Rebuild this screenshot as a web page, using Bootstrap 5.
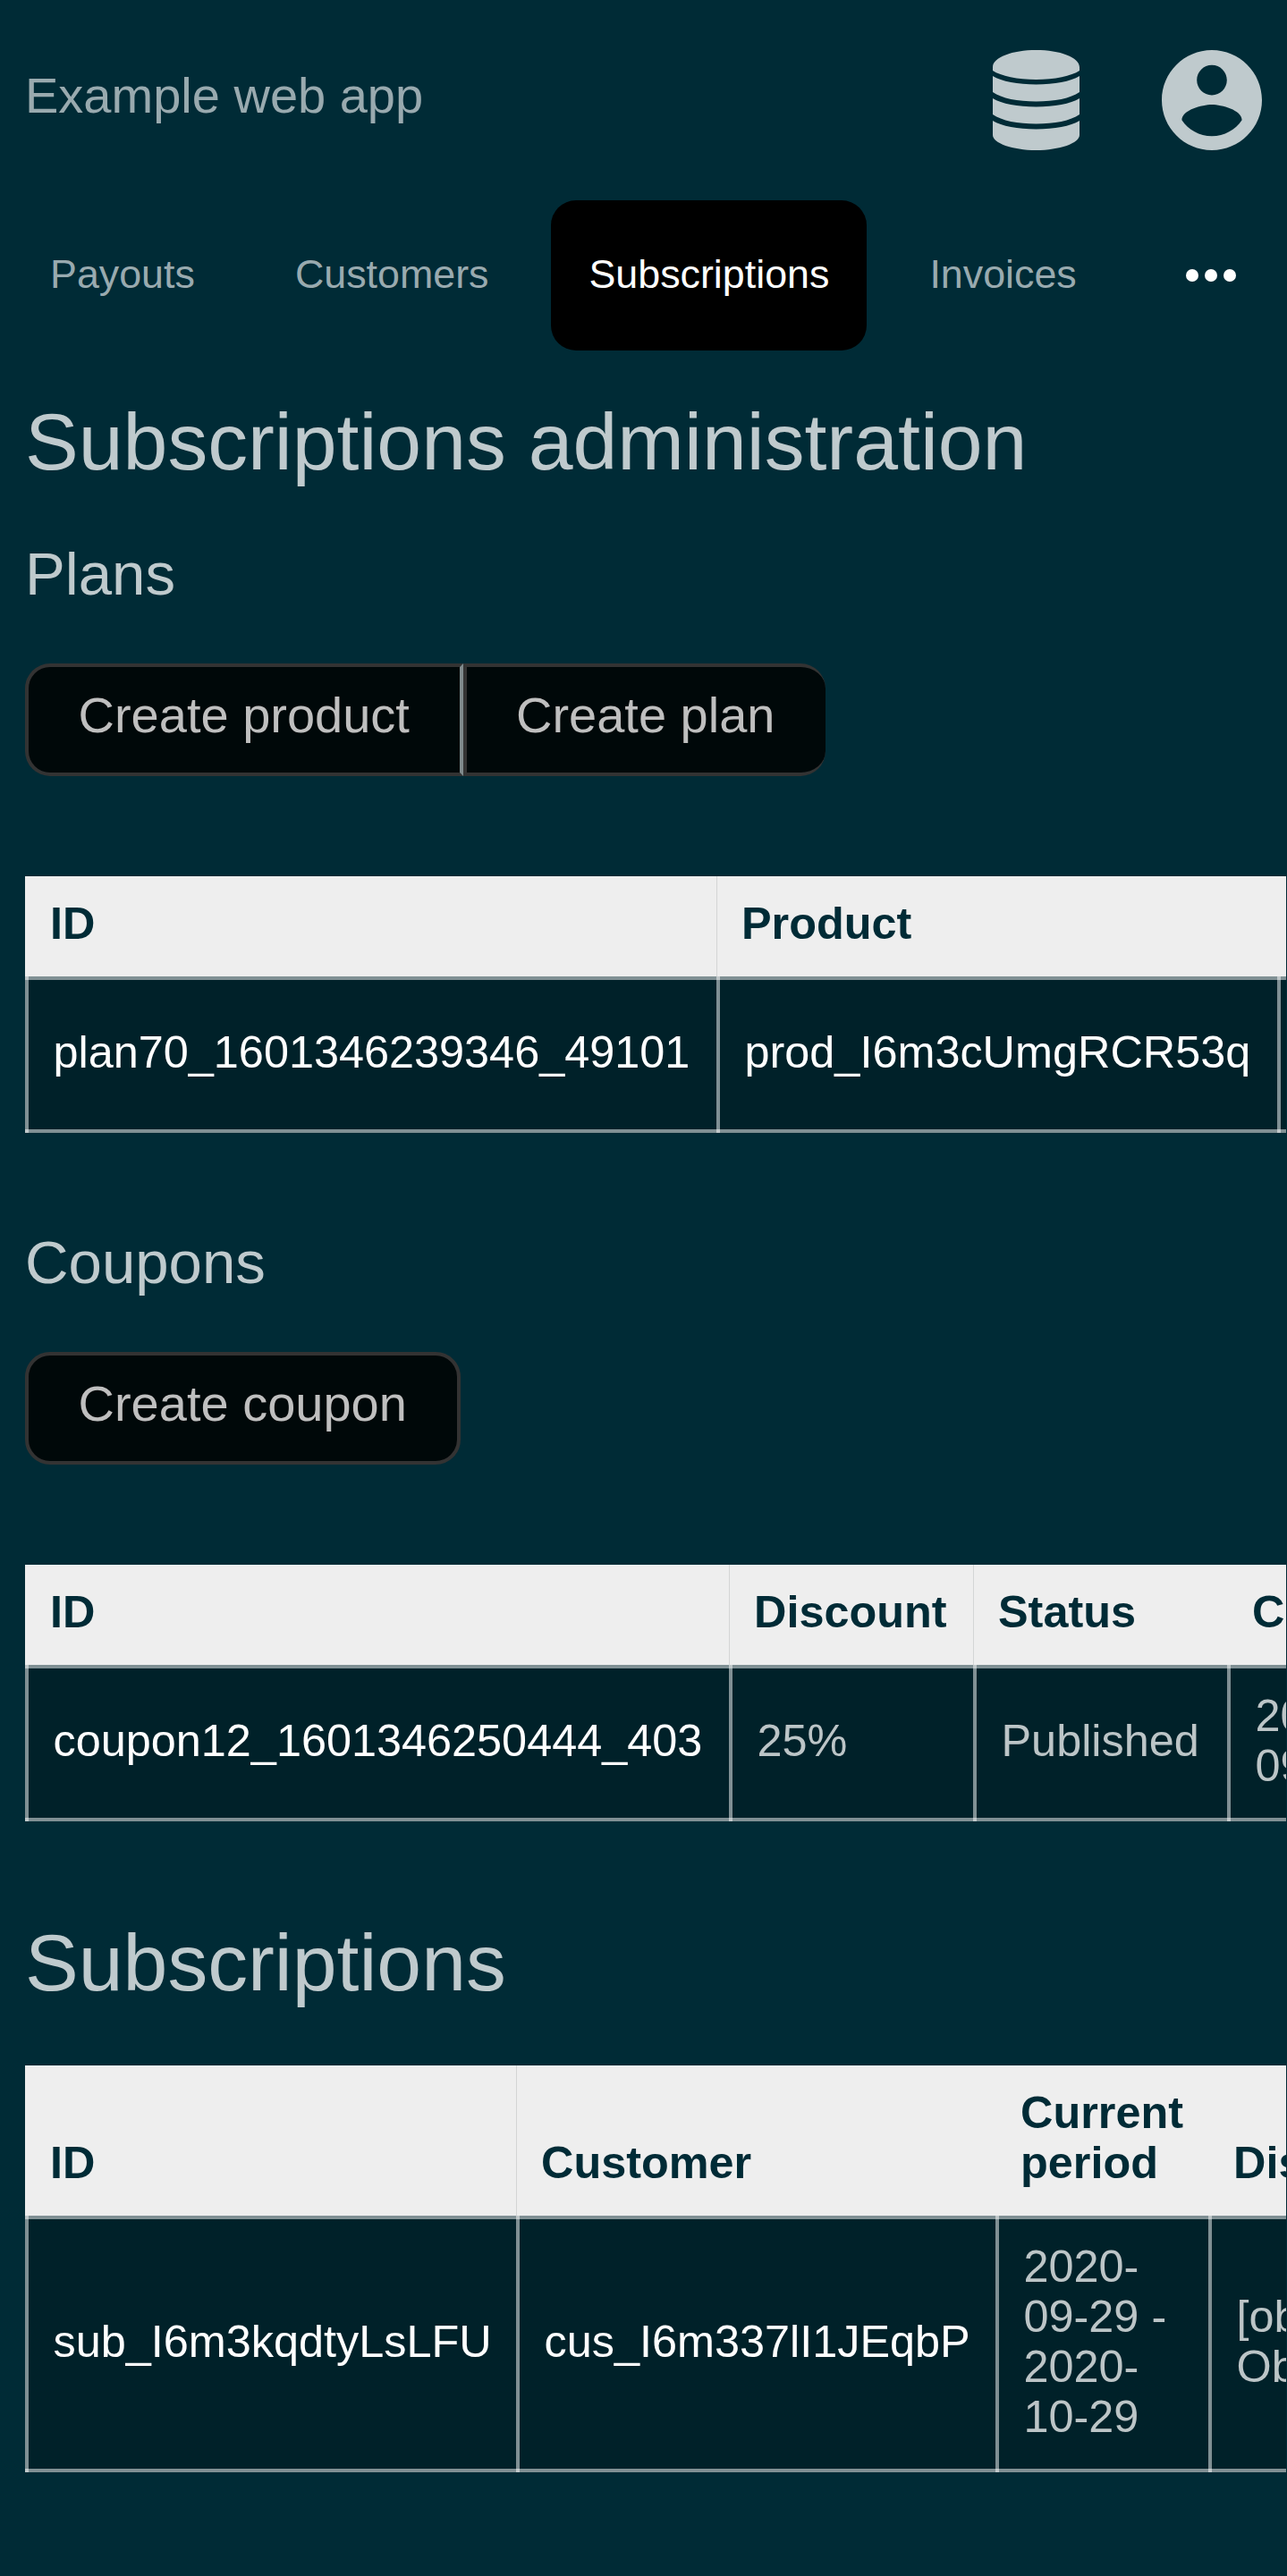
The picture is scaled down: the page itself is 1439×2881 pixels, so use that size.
<!DOCTYPE html>
<html lang="en">
<head>
<meta charset="utf-8">
<meta name="viewport" content="width=device-width, initial-scale=1">
<title>Subscriptions administration</title>
<link href="https://cdn.jsdelivr.net/npm/bootstrap@5.3.0/dist/css/bootstrap.min.css" rel="stylesheet">
<style>
  html { font-size: 56px; }
  body { width: 1438px; min-height: 2881px; background: #002b36; color: #bfcacd; font-family: "Liberation Sans", Arial, sans-serif; line-height: 1; overflow-x: hidden; }
  .topbar { height: 224px; padding: 0 27px 0 28px; }
  .brand-text { color: #99aaaf; font-size: 56px; line-height: 56px; margin-top: -11px; }
  .topbar-icons { padding-top: 56px; gap: 91px; }
  .ico { height: 112px; display: block; fill: #bfcacd; }
  .menu-row { height: 168px; padding: 0 14px; flex-wrap: nowrap; }
  .menu-row .nav-link { height: 168px; line-height: 165px; padding: 0 42px; border-radius: 28px; color: #99aaaf; margin-right: 28px; font-size: 44.8px; }
  .menu-row .nav-link.active { background: #000; color: #fff; }
  .more-dots { margin-left: auto; margin-right: 42px; }
  h1, h2 { font-weight: 400; color: #bfcacd; margin: 0; }
  h1 { font-size: 89.6px; line-height: 112px; padding: 46px 28px 0; }
  h1.section-title { padding: 102px 28px 59px; }
  h2 { font-size: 67.2px; line-height: 84px; padding: 50px 28px 0; }
  h2.coupons-title { padding-top: 103px; }
  .actions { padding: 58px 28px 112px; }
  .act { display: block; height: 126px; border: 4px solid #333; background: #000809; color: #bfbfbf; font-size: 56px; line-height: 108px; padding: 0 56px 0 55.5px; border-radius: 28px; text-decoration: none; }
  .act.first { border-radius: 28px 0 0 28px; border-right-color: #7f8a8c; }
  .act.last { border-radius: 0 28px 28px 0; border-right-width: 0; padding-left: 55px; padding-right: 57px; }
  .clipper { padding-left: 28px; overflow: hidden; }
  .grid-table { width: 2300px; table-layout: fixed; border-collapse: separate; border-spacing: 0; font-size: 50.4px; line-height: 56px; }
  .grid-table th { background: #eee; color: #002b36; padding: 25px 28px 31px; vertical-align: bottom; font-weight: 700; text-align: left; }
  .grid-table th.sep { border-left: 1px solid #d3d5d5; padding-left: 27px; }
  /* translucent rules that brighten where they cross */
  .grid-table td {
    --rule: linear-gradient(rgba(255,255,255,.5), rgba(255,255,255,.5));
    background: var(--rule) left top / 4px 100% no-repeat, var(--rule) left top / 100% 4px no-repeat, var(--rule) left bottom / 100% 4px no-repeat, #002129;
    padding: 29px 28px 34px 31.5px; height: 175px; vertical-align: middle; color: #bcc5c7; }
  .grid-table td.strong-id { color: #fff; white-space: nowrap; }
</style>
</head>
<body>
<header>
  <div class="topbar d-flex align-items-start justify-content-between">
    <div class="brand-text align-self-center">Example web app</div>
    <div class="topbar-icons d-flex">
      <svg class="ico" width="98" viewBox="0 0 98 112"><path d="M0 19C0 8 22 0 48.500 0S97 8 97 19v4C88 29 69 33 48.500 33S9 29 0 23zM0 29c10 6 28 9.500 48.500 9.500S87 35 97 29v18c-10 7-28 10.500-48.500 10.500S10 54 0 47zM0 54c10 6 28 9.500 48.500 9.500S87 60 97 54v18c-10 7-28 10.500-48.500 10.500S10 79 0 72zM0 79c10 6 28 9.500 48.500 9.500S87 85 97 79v16c0 9-22 17-48.500 17S0 104 0 95z"/></svg>
      <svg class="ico" width="112" viewBox="2 2 20 20"><path d="M12 2C6.480 2 2 6.480 2 12s4.480 10 10 10 10-4.480 10-10S17.520 2 12 2zm0 3c1.660 0 3 1.340 3 3s-1.340 3-3 3-3-1.340-3-3 1.340-3 3-3zm0 14.200c-2.500 0-4.710-1.280-6-3.220.03-1.990 4-3.080 6-3.080 1.990 0 5.970 1.090 6 3.080-1.290 1.940-3.500 3.220-6 3.220z"/></svg>
    </div>
  </div>
  <ul class="menu-row nav align-items-center">
    <li class="nav-item"><a class="nav-link" href="#">Payouts</a></li>
    <li class="nav-item"><a class="nav-link" href="#">Customers</a></li>
    <li class="nav-item"><a class="nav-link active" href="#">Subscriptions</a></li>
    <li class="nav-item"><a class="nav-link" href="#">Invoices</a></li>
    <li class="nav-item more-dots"><svg class="d-block" width="56" height="14" viewBox="0 0 56 14" fill="#fff"><circle cx="7" cy="7" r="7"/><circle cx="28" cy="7" r="7"/><circle cx="49" cy="7" r="7"/></svg></li>
  </ul>
</header>
<main>
  <h1>Subscriptions administration</h1>
  <h2>Plans</h2>
  <div class="actions d-flex">
    <a class="act first" href="#">Create product</a><a class="act last" href="#">Create plan</a>
  </div>
  <div class="clipper">
    <table class="grid-table">
      <colgroup><col style="width:773px"><col style="width:627px"><col></colgroup>
      <thead><tr><th>ID</th><th class="sep">Product</th><th></th></tr></thead>
      <tbody><tr><td class="strong-id">plan70_1601346239346_49101</td><td class="strong-id">prod_I6m3cUmgRCR53q</td><td></td></tr></tbody>
    </table>
  </div>
  <h2 class="coupons-title">Coupons</h2>
  <div class="actions d-flex">
    <a class="act" href="#">Create coupon</a>
  </div>
  <div class="clipper">
    <table class="grid-table">
      <colgroup><col style="width:787px"><col style="width:273px"><col style="width:284px"><col style="width:200px"><col></colgroup>
      <thead><tr><th>ID</th><th class="sep">Discount</th><th class="sep">Status</th><th>Created</th><th></th></tr></thead>
      <tbody><tr><td class="strong-id">coupon12_1601346250444_403</td><td>25%</td><td>Published</td><td>2020-<br>09-29</td><td></td></tr></tbody>
    </table>
  </div>
  <h1 class="section-title">Subscriptions</h1>
  <div class="clipper">
    <table class="grid-table">
      <colgroup><col style="width:549px"><col style="width:536px"><col style="width:238px"><col style="width:260px"><col></colgroup>
      <thead><tr><th>ID</th><th class="sep">Customer</th><th>Current period</th><th>Discount</th><th></th></tr></thead>
      <tbody><tr><td class="strong-id">sub_I6m3kqdtyLsLFU</td><td class="strong-id">cus_I6m337lI1JEqbP</td><td>2020-<br>09-29 -<br>2020-<br>10-29</td><td>[object<br>Object]</td><td></td></tr></tbody>
    </table>
  </div>
</main>
<script src="https://cdn.jsdelivr.net/npm/bootstrap@5.3.0/dist/js/bootstrap.bundle.min.js"></script>
</body>
</html>
